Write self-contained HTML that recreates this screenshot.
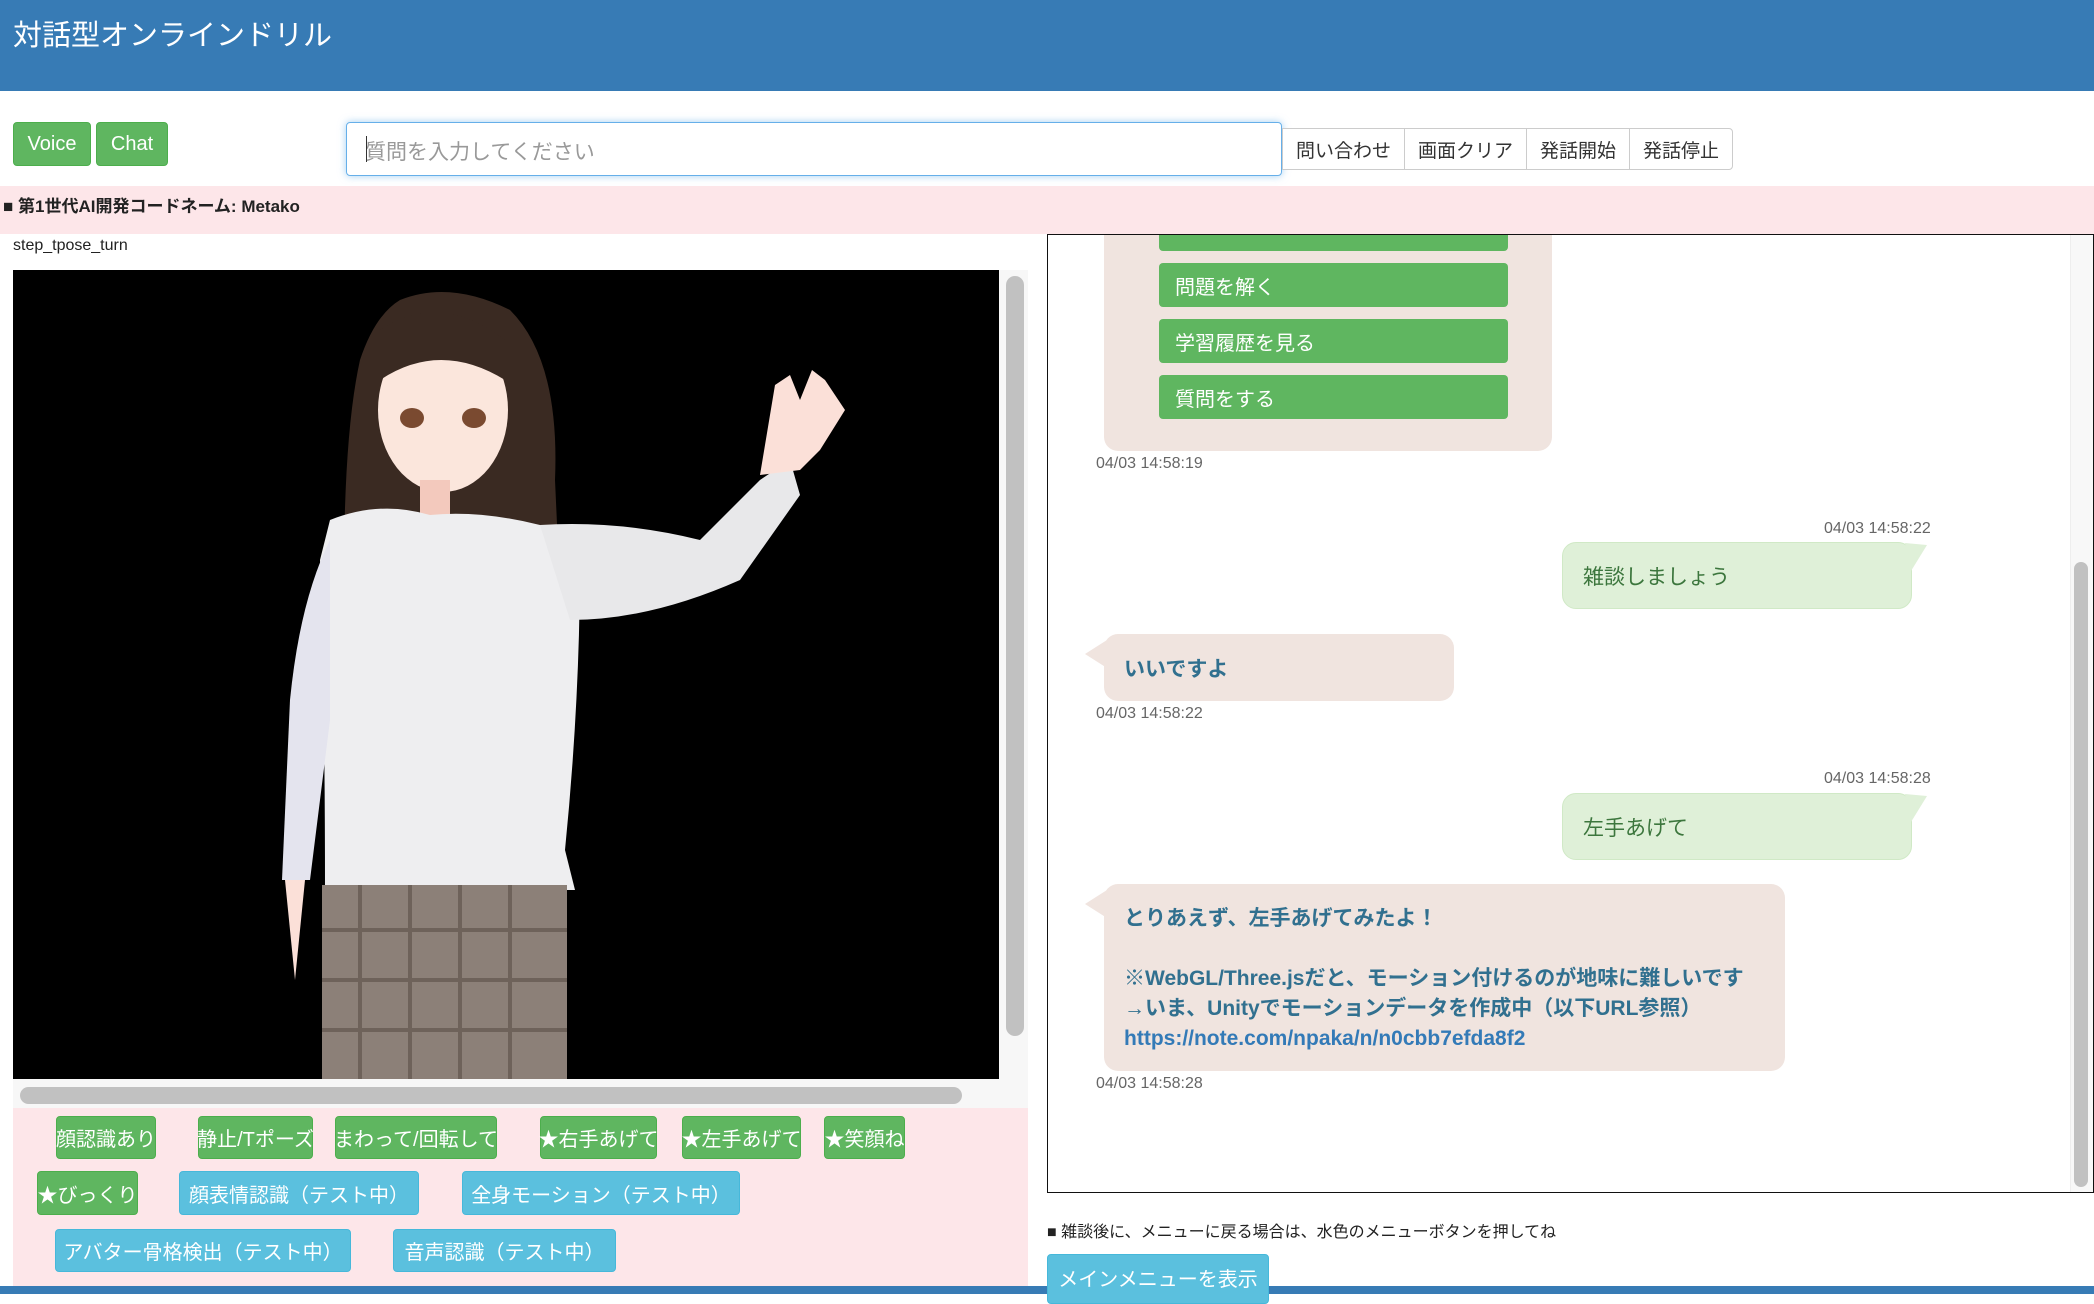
<!DOCTYPE html>
<html><head><meta charset="utf-8">
<style>
*{box-sizing:border-box;margin:0;padding:0}
body{width:2094px;height:1294px;overflow:hidden;background:#fff;font-family:"Liberation Sans","Noto Sans CJK JP",sans-serif;color:#333;position:relative}
.a{position:absolute}
.hdr{left:0;top:0;width:2094px;height:91px;background:#377bb5}
.title{left:13px;top:12px;color:#fff;font-size:29px}
.btn{position:absolute;border-radius:4px;color:#fff;font-size:20px;display:flex;align-items:center;justify-content:center;white-space:nowrap}
.g{background:#5fb660;border:1px solid #4cae4c}
.b{background:#5bc0de;border:1px solid #46b8da}
.grp{left:1282px;top:128px;height:42px;border:1px solid #ccc;border-radius:0 4px 4px 0;display:flex;background:#fff}
.grp div{font-size:19px;padding:0 13px;display:flex;align-items:center;border-left:1px solid #ccc;color:#333}
.grp div:first-child{border-left:none}
.ts{font-size:16px;color:#666}
.bub{position:absolute;border-radius:14px;background:#f0e4df}
.ub{position:absolute;border-radius:14px;background:#dff0d8;border:1px solid #d0e9c6;color:#3c763d;font-size:21px;padding-left:20px;display:flex;align-items:center}
.bt{color:#31708f;font-weight:bold;font-size:21px}
.gb{position:absolute;left:1159px;width:349px;height:44px;background:#5fb660;border-radius:4px;color:#fff;font-size:20px;padding-left:16px;display:flex;align-items:center}
</style></head><body>
<div class="a hdr"></div>
<div class="a title">対話型オンラインドリル</div>
<div class="btn g" style="left:13px;top:122px;width:78px;height:44px">Voice</div>
<div class="btn g" style="left:96px;top:122px;width:72px;height:44px">Chat</div>
<div class="a" style="left:346px;top:122px;width:936px;height:54px;border:1px solid #66afe9;border-radius:4px;box-shadow:0 0 8px rgba(102,175,233,.6);font-size:21px;color:#999;padding:13px 18px">質問を入力してください</div>
<div class="a" style="left:366px;top:136px;width:1px;height:26px;background:#333"></div>
<div class="a grp"><div>問い合わせ</div><div>画面クリア</div><div>発話開始</div><div>発話停止</div></div>
<div class="a" style="left:0;top:186px;width:2094px;height:48px;background:#fde6e9"></div>
<div class="a" style="left:3px;top:192px;font-size:17px;font-weight:bold;color:#222">■ 第1世代AI開発コードネーム: Metako</div>
<div class="a" style="left:13px;top:237px;font-size:16px;color:#222">step_tpose_turn</div>
<!-- canvas -->
<div class="a" style="left:13px;top:270px;width:1015px;height:838px;background:#f7f7f7"></div>
<div class="a" style="left:1006px;top:276px;width:18px;height:760px;background:#c1c1c1;border-radius:9px"></div>
<div class="a" style="left:20px;top:1087px;width:942px;height:17px;background:#c1c1c1;border-radius:9px"></div>
<svg class="a" style="left:13px;top:270px" width="986" height="809" viewBox="13 270 986 809">
<rect x="13" y="270" width="986" height="809" fill="#000"/>
<path d="M400 300 Q450 280 510 310 Q560 360 555 480 L565 700 Q570 800 545 900 L380 900 Q340 800 345 650 Q340 450 360 360 Q375 315 400 300Z" fill="#3a2a22"/>
<ellipse cx="443" cy="410" rx="65" ry="82" fill="#fbe6dc"/>
<path d="M380 330 Q440 290 505 340 L505 380 Q440 340 380 380Z" fill="#3a2a22"/>
<ellipse cx="412" cy="418" rx="12" ry="10" fill="#7a4a30"/>
<ellipse cx="474" cy="418" rx="12" ry="10" fill="#7a4a30"/>
<rect x="420" y="480" width="30" height="40" fill="#f3c9bd"/>
<path d="M330 520 Q380 500 430 515 Q480 510 540 525 L580 560 Q580 700 565 850 L575 890 L325 890 Q325 700 320 560Z" fill="#eeeef0"/>
<path d="M540 525 Q620 520 700 540 L760 480 L790 460 L800 495 L740 580 Q650 620 570 620Z" fill="#e8e8ea"/>
<path d="M760 475 L775 385 L790 375 L800 400 L812 370 L825 380 L835 395 L845 410 L820 450 L800 470Z" fill="#fbe0d8"/>
<path d="M330 540 Q300 600 290 700 L282 880 L310 880 L330 720Z" fill="#e4e4ee"/>
<path d="M285 880 L295 980 L305 880Z" fill="#fbe0d8"/>
<rect x="322" y="885" width="245" height="194" fill="#8c8078"/>
<path d="M322 930H567M322 980H567M322 1030H567M360 885V1079M410 885V1079M460 885V1079M510 885V1079" stroke="#6e625a" stroke-width="4"/>
</svg>
<div class="a" style="left:13px;top:1108px;width:1015px;height:186px;background:#fde6e9"></div>
<div class="btn g" style="left:56px;top:1116px;width:100px;height:43px">顔認識あり</div>
<div class="btn g" style="left:198px;top:1116px;width:115px;height:43px">静止/Tポーズ</div>
<div class="btn g" style="left:335px;top:1116px;width:162px;height:43px">まわって/回転して</div>
<div class="btn g" style="left:540px;top:1116px;width:117px;height:43px">★右手あげて</div>
<div class="btn g" style="left:682px;top:1116px;width:119px;height:43px">★左手あげて</div>
<div class="btn g" style="left:824px;top:1116px;width:81px;height:43px">★笑顔ね</div>
<div class="btn g" style="left:37px;top:1171px;width:101px;height:44px">★びっくり</div>
<div class="btn b" style="left:179px;top:1171px;width:240px;height:44px">顔表情認識（テスト中）</div>
<div class="btn b" style="left:462px;top:1171px;width:278px;height:44px">全身モーション（テスト中）</div>
<div class="btn b" style="left:55px;top:1229px;width:296px;height:43px">アバター骨格検出（テスト中）</div>
<div class="btn b" style="left:393px;top:1229px;width:223px;height:43px">音声認識（テスト中）</div>
<div class="a" style="left:0;top:1286px;width:2094px;height:8px;background:#377bb5"></div>
<!-- chat -->
<div class="a" style="left:1047px;top:234px;width:1047px;height:959px;border:1px solid #111;overflow:hidden">
<div class="a" style="left:1022px;top:0;width:24px;height:958px;background:#f8f8f8;border-left:1px solid #eee"></div>
<div class="a" style="left:1026px;top:327px;width:14px;height:625px;background:#c1c1c1;border-radius:7px"></div>
</div>
<div class="bub" style="left:1104px;top:235px;width:448px;height:216px;border-radius:0 0 14px 14px"></div>
<div class="gb" style="top:235px;height:16px;border-radius:0 0 4px 4px"></div>
<div class="gb" style="top:263px">問題を解く</div>
<div class="gb" style="top:319px">学習履歴を見る</div>
<div class="gb" style="top:375px">質問をする</div>
<div class="a ts" style="left:1096px;top:455px">04/03 14:58:19</div>
<div class="a ts" style="left:1824px;top:520px">04/03 14:58:22</div>
<div class="ub" style="left:1562px;top:542px;width:350px;height:67px">雑談しましょう</div>
<svg class="a" style="left:1905px;top:543px" width="22" height="30"><path d="M0 0L22 2L6 28Z" fill="#dff0d8"/></svg>
<div class="bub" style="left:1104px;top:634px;width:350px;height:67px"></div>
<svg class="a" style="left:1083px;top:640px" width="24" height="30"><path d="M24 0L2 14L24 28Z" fill="#f0e4df"/></svg>
<div class="a bt" style="left:1124px;top:653px">いいですよ</div>
<div class="a ts" style="left:1096px;top:705px">04/03 14:58:22</div>
<div class="a ts" style="left:1824px;top:770px">04/03 14:58:28</div>
<div class="ub" style="left:1562px;top:793px;width:350px;height:67px">左手あげて</div>
<svg class="a" style="left:1905px;top:794px" width="22" height="30"><path d="M0 0L22 2L6 28Z" fill="#dff0d8"/></svg>
<div class="bub" style="left:1104px;top:884px;width:681px;height:187px"></div>
<svg class="a" style="left:1083px;top:890px" width="24" height="30"><path d="M24 0L2 14L24 28Z" fill="#f0e4df"/></svg>
<div class="a bt" style="left:1124px;top:904px;line-height:30px">とりあえず、左手あげてみたよ！<br><br>※WebGL/Three.jsだと、モーション付けるのが地味に難しいです<br>→いま、Unityでモーションデータを作成中（以下URL参照）<br><span style="color:#337ab7">https://note.com/npaka/n/n0cbb7efda8f2</span></div>
<div class="a ts" style="left:1096px;top:1075px">04/03 14:58:28</div>
<div class="a" style="left:1047px;top:1218px;font-size:16px;color:#222">■ 雑談後に、メニューに戻る場合は、水色のメニューボタンを押してね</div>
<div class="btn b" style="left:1047px;top:1254px;width:222px;height:50px;align-items:flex-start;padding-top:8px">メインメニューを表示</div>
</body></html>
